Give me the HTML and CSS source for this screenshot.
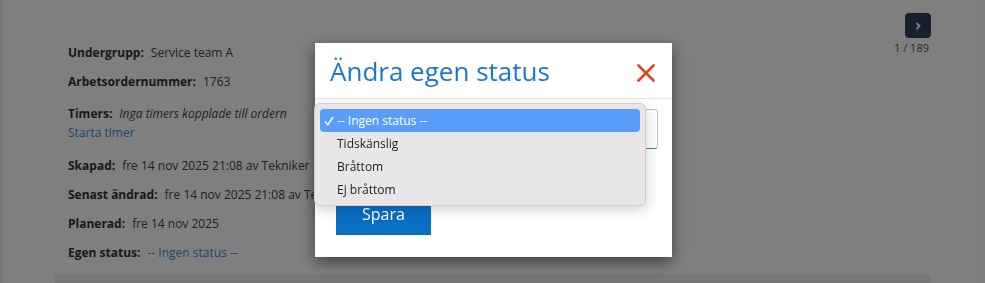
FILE: index.html
```html
<!DOCTYPE html>
<html lang="sv">

<head>
    <meta charset="UTF-8">
    <meta name="viewport" content="width=device-width, initial-scale=1.0">
    <title>Arbetsorder 1763</title>
    <link rel="stylesheet" href="styles.css">
</head>

<body>
    <div class="page">
        <main class="content">
            <div class="top">
                <section class="details">
                    <div class="row"><span class="label">Undergrupp:</span><span class="value">Service team A</span></div>
                    <div class="row"><span class="label">Arbetsordernummer:</span><span class="value">1763</span></div>
                    <div class="row row-timers">
                        <div><span class="label">Timers:</span><em class="value">Inga timers kopplade till ordern</em></div>
                        <a href="#" class="link">Starta timer</a>
                    </div>
                    <div class="row"><span class="label">Skapad:</span><span class="value">fre 14 nov 2025 21:08 av Tekniker 1</span></div>
                    <div class="row"><span class="label">Senast ändrad:</span><span class="value">fre 14 nov 2025 21:08 av Tekniker 1</span></div>
                    <div class="row"><span class="label">Planerad:</span><span class="value">fre 14 nov 2025</span></div>
                    <div class="row"><span class="label">Egen status:</span><a href="#" class="value link">-- Ingen status --</a></div>
                </section>
                <aside class="pager">
                    <button class="pager-next" aria-label="Nästa">
                        <svg width="6" height="8" viewBox="0 0 6 8"><polyline points="1.5,1 4.5,4 1.5,7" fill="none" stroke="#fff" stroke-width="1.8"/></svg>
                    </button>
                    <span class="pager-count">1 / 189</span>
                </aside>
            </div>
            <div class="footer-bar"></div>
        </main>
    </div>

    <div class="backdrop"></div>

    <div class="modal">
        <div class="modal-content">
            <div class="modal-header">
                <h4 class="modal-title">Ändra egen status</h4>
                <button class="close" aria-label="Stäng">
                    <svg width="18" height="18" viewBox="0 0 18 18"><path d="M1.5 1.5 L16.5 16.5 M16.5 1.5 L1.5 16.5" stroke="#e5421f" stroke-width="2.6" stroke-linecap="round"/></svg>
                </button>
            </div>
            <div class="modal-body">
                <div class="select-box"></div>
                <button class="btn-save">Spara</button>

                <ul class="select-menu">
                    <li class="selected">
                        <svg class="check" width="10" height="10" viewBox="0 0 10 10"><polyline points="1,5.5 3.8,8.8 9,1" fill="none" stroke="#fff" stroke-width="1.5"/></svg>
                        -- Ingen status --
                    </li>
                    <li>Tidskänslig</li>
                    <li>Bråttom</li>
                    <li>Ej bråttom</li>
                </ul>
            </div>
        </div>
    </div>
</body>

</html>
```

FILE: styles.css
```css
/* Arbetsorder - detaljvy med modal */
body {
    font-family: 'Open Sans', 'Liberation Sans', sans-serif;
    background: #ffffff;
    color: #333;
    margin: 0;
    height: 283px;
    overflow: hidden;
}

.page {
    height: 100%;
    border-left: 3px solid #f0f0f0;
    border-right: 3px solid #fafafa;
    box-sizing: border-box;
}

.content {
    margin: 0 51px 0 52px;
    display: flex;
    flex-direction: column;
}

.top {
    display: flex;
    justify-content: space-between;
}

.details {
    padding: 44px 0 0 13px;
    font-size: 12px;
    line-height: 18px;
}

.row {
    margin-bottom: 11px;
    white-space: nowrap;
}

.row-timers {
    padding-top: 3px;
    margin-bottom: 15px;
}

.label {
    font-weight: 700;
    color: #333;
}

.value {
    margin-left: 7px;
    color: #444;
}

.link {
    color: #3a8ad8;
    text-decoration: none;
}

.row-timers .link {
    display: block;
    margin-top: 1px;
}

/* Bläddring */
.pager {
    padding-top: 13px;
    display: flex;
    flex-direction: column;
    align-items: flex-end;
}

.pager-next {
    width: 26px;
    height: 25px;
    border: none;
    border-radius: 4px;
    background: #30405a;
    display: flex;
    align-items: center;
    justify-content: center;
    padding: 0;
}

.pager-count {
    margin-top: 3px;
    margin-right: 2px;
    font-size: 11px;
    line-height: 14px;
    color: #555;
}

.footer-bar {
    margin-top: 1px;
    height: 9px;
    background: #eeeeee;
}

/* Modal */
.backdrop {
    position: fixed;
    inset: 0;
    background: rgba(0, 0, 0, 0.5);
}

.modal {
    position: fixed;
    inset: 0;
    display: flex;
    justify-content: center;
    padding: 43px 0 0 2px;
}

.modal-content {
    position: relative;
    width: 357px;
    height: 214px;
    background: #fff;
    box-shadow: 0 5px 15px rgba(0, 0, 0, 0.5);
    align-self: flex-start;
}

.modal-header {
    display: flex;
    justify-content: space-between;
    align-items: center;
    padding: 14px 17px 13px 15px;
    border-bottom: 1px solid #e8e8e8;
}

.modal-title {
    margin: 0;
    font-size: 26px;
    line-height: 28px;
    font-weight: 400;
    color: #1a78d0;
}

.close {
    border: none;
    background: none;
    padding: 0;
    width: 18px;
    height: 18px;
    margin-top: 3px;
}

.modal-body {
    padding: 10px 14px 22px 20px;
}

.select-box {
    height: 38px;
    border: 1px solid #c4c4c4;
    border-bottom-color: #3a7fc4;
    border-radius: 3px;
}

.btn-save {
    margin-top: 44px;
    width: 95px;
    height: 42px;
    border: none;
    background: #0a6fc4;
    color: #fff;
    font-family: inherit;
    font-size: 16px;
    padding: 0;
    margin-left: 1px;
    display: block;
}

/* Öppen rullgardinslista */
.select-menu {
    position: absolute;
    left: -1px;
    top: 60px;
    width: 332px;
    height: 103px;
    box-sizing: border-box;
    margin: 0;
    padding: 5px 5px;
    list-style: none;
    background: #e9e7e5;
    border: 1px solid #cfcdcb;
    border-radius: 6px;
    box-shadow: 0 4px 14px rgba(0, 0, 0, 0.18);
    font-size: 12px;
}

.select-menu li {
    position: relative;
    height: 23px;
    line-height: 23px;
    padding-left: 17px;
    color: #222;
}

.select-menu li.selected {
    background: #5a9df8;
    color: #fff;
    border-radius: 4px;
}

.check {
    position: absolute;
    left: 4px;
    top: 7px;
}
```
